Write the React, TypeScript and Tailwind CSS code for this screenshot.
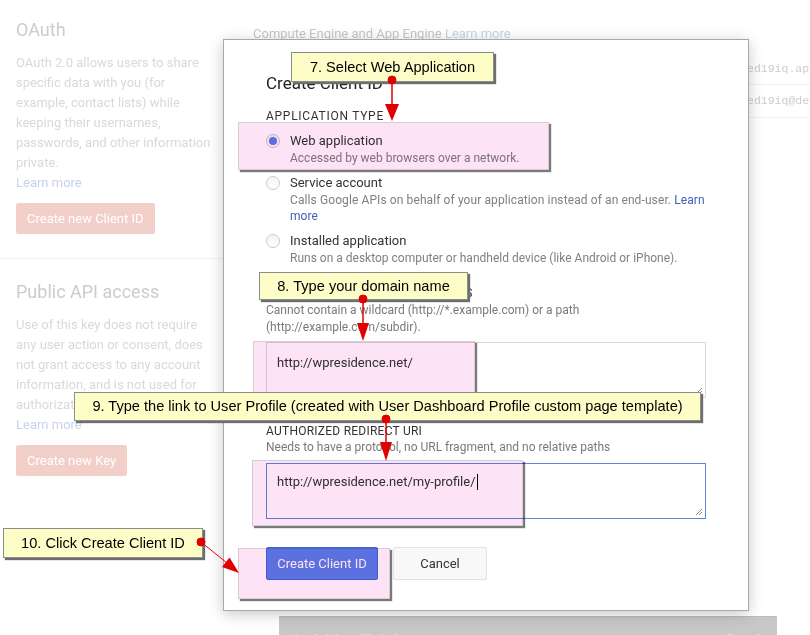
import React from "react";

const callout =
  "absolute flex items-center justify-center border border-[#8c8c8c] bg-[#fdfdc8] text-[14.6px] leading-none text-black shadow-[2px_2px_1px_#6e6e6e] font-['Liberation_Sans',Arial,sans-serif]";
const highlight =
  "absolute border border-[#d9cbd5] bg-[#fce3f5] mix-blend-multiply shadow-[2px_2px_1px_#7a7a7a]";

function Radio({ checked }: { checked?: boolean }) {
  return (
    <span className="mt-[2px] flex h-[14px] w-[14px] shrink-0 items-center justify-center rounded-full border border-[#c9c9c9] bg-gradient-to-b from-[#f4f4f4] to-white">
      {checked && <span className="h-[8px] w-[8px] rounded-full bg-[#5a7de6]" />}
    </span>
  );
}

function ResizeGrip() {
  return (
    <svg className="absolute bottom-[2px] right-[2px]" width="8" height="8" viewBox="0 0 8 8">
      <path d="M7 1 L1 7 M7 4 L4 7" stroke="#888" strokeWidth="1" />
    </svg>
  );
}

export default function App() {
  return (
    <div className="relative h-[635px] w-[810px] overflow-hidden bg-white font-['Roboto',Arial,sans-serif]">
      {/* Background console page */}
      <div className="flex">
        <aside className="w-[240px] shrink-0">
          <div className="border-b border-[#f2f2f2] pb-[24px] pl-[16px] pt-[18px]">
            <h2 className="text-[18px] leading-[24px] text-[#cccccc]">OAuth</h2>
            <p className="mt-[11px] text-[13px] leading-[20px] text-[#d9d9d9]">
              OAuth 2.0 allows users to share
              <br />
              specific data with you (for
              <br />
              example, contact lists) while
              <br />
              keeping their usernames,
              <br />
              passwords, and other information
              <br />
              private.
              <br />
              <span className="text-[#c8d2ec]">Learn more</span>
            </p>
            <button className="mt-[10px] h-[31px] rounded-[2px] bg-[#f3cfca] px-[11px] text-[13px] text-white">
              Create new Client ID
            </button>
          </div>
          <div className="pl-[16px] pt-[21px]">
            <h2 className="text-[18px] leading-[24px] text-[#cccccc]">Public API access</h2>
            <p className="mt-[11px] text-[13px] leading-[20px] text-[#d9d9d9]">
              Use of this key does not require
              <br />
              any user action or consent, does
              <br />
              not grant access to any account
              <br />
              information, and is not used for
              <br />
              authorization.
              <br />
              <span className="text-[#c8d2ec]">Learn more</span>
            </p>
            <button className="mt-[10px] h-[31px] rounded-[2px] bg-[#f3cfca] px-[11px] text-[13px] text-white">
              Create new Key
            </button>
          </div>
        </aside>

        <main className="flex min-w-0 flex-1 flex-col pl-[13px] pt-[26px]">
          <div className="text-[13px] leading-[16px] text-[#c6c6c6]">
            Compute Engine and App Engine <span className="text-[#c6d3ee]">Learn more</span>
          </div>
          <div className="mt-[11px] flex h-[32px] items-center overflow-hidden whitespace-nowrap border-b border-[#f1f1f1] pl-[494px] font-['Liberation_Mono',monospace] text-[11.5px] text-[#cdcdcd]">
            ed19iq.apps.googleusercontent.com
          </div>
          <div className="flex h-[33px] items-center overflow-hidden whitespace-nowrap border-b border-[#f1f1f1] pl-[494px] font-['Liberation_Mono',monospace] text-[11.5px] text-[#cdcdcd]">
            ed19iq@developer.gserviceaccount.com
          </div>
          <div className="ml-[26px] mt-[498px] flex h-[40px] w-[498px] items-start justify-between border-t border-[#bcbcbc] bg-[#c8c8c8] px-[12px] pt-[12px] text-[15px] font-bold text-[#dedede]">
            <span>Activities (links)</span>
            <span>Oauth</span>
          </div>
        </main>
      </div>

      {/* Create Client ID dialog */}
      <div className="absolute left-[223px] top-[39px] h-[572px] w-[526px] border border-[#a8a8a8] bg-white pl-[42px] pr-[42px] pt-[33px] shadow-[0_3px_14px_rgba(0,0,0,0.22)]">
        <h1 className="text-[17px] leading-[20px] text-[#222]">Create Client ID</h1>
        <div className="mt-[15px] text-[12px] uppercase leading-[16px] tracking-[0.06em] text-[#333]">
          Application type
        </div>

        <div className="mt-[8px] flex flex-col gap-[8px]">
          <label className="flex gap-[10px]">
            <Radio checked />
            <div>
              <div className="text-[13px] leading-[18px] text-[#333]">Web application</div>
              <div className="text-[12px] leading-[16px] text-[#808080]">
                Accessed by web browsers over a network.
              </div>
            </div>
          </label>
          <label className="flex gap-[10px]">
            <Radio />
            <div>
              <div className="text-[13px] leading-[18px] text-[#333]">Service account</div>
              <div className="text-[12px] leading-[16px] tracking-[0.1px] text-[#808080]">
                Calls Google APIs on behalf of your application instead of an end-user.{" "}
                <span className="text-[#3f5fb8]">Learn</span>
                <br />
                <span className="text-[#3f5fb8]">more</span>
              </div>
            </div>
          </label>
          <label className="flex gap-[10px]">
            <Radio />
            <div>
              <div className="text-[13px] leading-[18px] text-[#333]">Installed application</div>
              <div className="text-[12px] leading-[16px] text-[#808080]">
                Runs on a desktop computer or handheld device (like Android or iPhone).
              </div>
            </div>
          </label>
        </div>

        <div className="mt-[19px] text-[12px] uppercase leading-[16px] tracking-[0.04em] text-[#333]">
          Authorized Javascript origins
        </div>
        <div className="mt-[1px] text-[12px] leading-[17px] text-[#7a7a7a]">
          Cannot contain a wildcard (http://*.example.com) or a path
          <br />
          (http://example.com/subdir).
        </div>
        <div className="relative mt-[6px] h-[56px] border border-[#d9d9d9] pl-[10px] pt-[12px] text-[13px] leading-[16px] text-[#333]">
          http://wpresidence.net/
          <ResizeGrip />
        </div>

        <div className="mt-[25px] text-[12px] uppercase leading-[16px] tracking-[0.02em] text-[#333]">
          Authorized redirect URI
        </div>
        <div className="text-[12px] leading-[16px] text-[#7a7a7a]">
          Needs to have a protocol, no URL fragment, and no relative paths
        </div>
        <div className="relative mt-[8px] flex h-[56px] items-start border border-[#5b88d6] pl-[10px] pt-[10px] text-[13px] leading-[16px] text-[#333]">
          http://wpresidence.net/my-profile/
          <span className="ml-[1px] h-[16px] w-px bg-black" />
          <ResizeGrip />
        </div>

        <div className="mt-[28px] flex gap-[15px]">
          <button className="h-[33px] w-[112px] rounded-[2px] border border-[#3f66d8] bg-[#5b7fe8] pt-[1px] text-[13px] text-white">
            Create Client ID
          </button>
          <button className="h-[33px] w-[94px] rounded-[2px] border border-[#e2e2e2] bg-[#f8f8f8] pt-[1px] text-[13px] text-[#333]">
            Cancel
          </button>
        </div>
      </div>

      {/* Highlight boxes */}
      <div className={`${highlight} left-[238px] top-[122px] h-[48px] w-[311px]`} />
      <div className={`${highlight} left-[253px] top-[341px] h-[61px] w-[222px]`} />
      <div className={`${highlight} left-[252px] top-[460px] h-[66px] w-[271px]`} />
      <div className={`${highlight} left-[238px] top-[548px] h-[51px] w-[152px]`} />

      {/* Callouts */}
      <div className={`${callout} left-[291px] top-[52px] h-[30px] w-[203px]`}>7. Select Web Application</div>
      <div className={`${callout} left-[259px] top-[272px] h-[28px] w-[209px]`}>8. Type your domain name</div>
      <div className={`${callout} left-[74px] top-[392px] h-[29px] w-[627px]`}>
        9. Type the link to User Profile (created with User Dashboard Profile custom page template)
      </div>
      <div className={`${callout} left-[3px] top-[528px] h-[30px] w-[200px]`}>10. Click Create Client ID</div>

      {/* Arrows */}
      <svg className="pointer-events-none absolute inset-0" width="810" height="635">
        <g fill="#e00000" stroke="#e00000">
          <line x1="392" y1="80" x2="392" y2="106" strokeWidth="1.5" />
          <polygon points="385,104 399,104 392,121" stroke="none" />
          <circle cx="392" cy="80" r="4" />

          <line x1="363" y1="299" x2="363" y2="325" strokeWidth="1.5" />
          <polygon points="357,323 369,323 363,341" stroke="none" />
          <circle cx="363" cy="299" r="4" />

          <line x1="386" y1="419" x2="386" y2="444" strokeWidth="1.5" />
          <polygon points="380,442 392,442 386,461" stroke="none" />
          <circle cx="386" cy="419" r="4" />

          <line x1="201" y1="542" x2="227" y2="563" strokeWidth="1" />
          <polygon points="229.5,557.5 222,567 239,573" stroke="none" />
          <circle cx="201" cy="542" r="4" />
        </g>
      </svg>
    </div>
  );
}
